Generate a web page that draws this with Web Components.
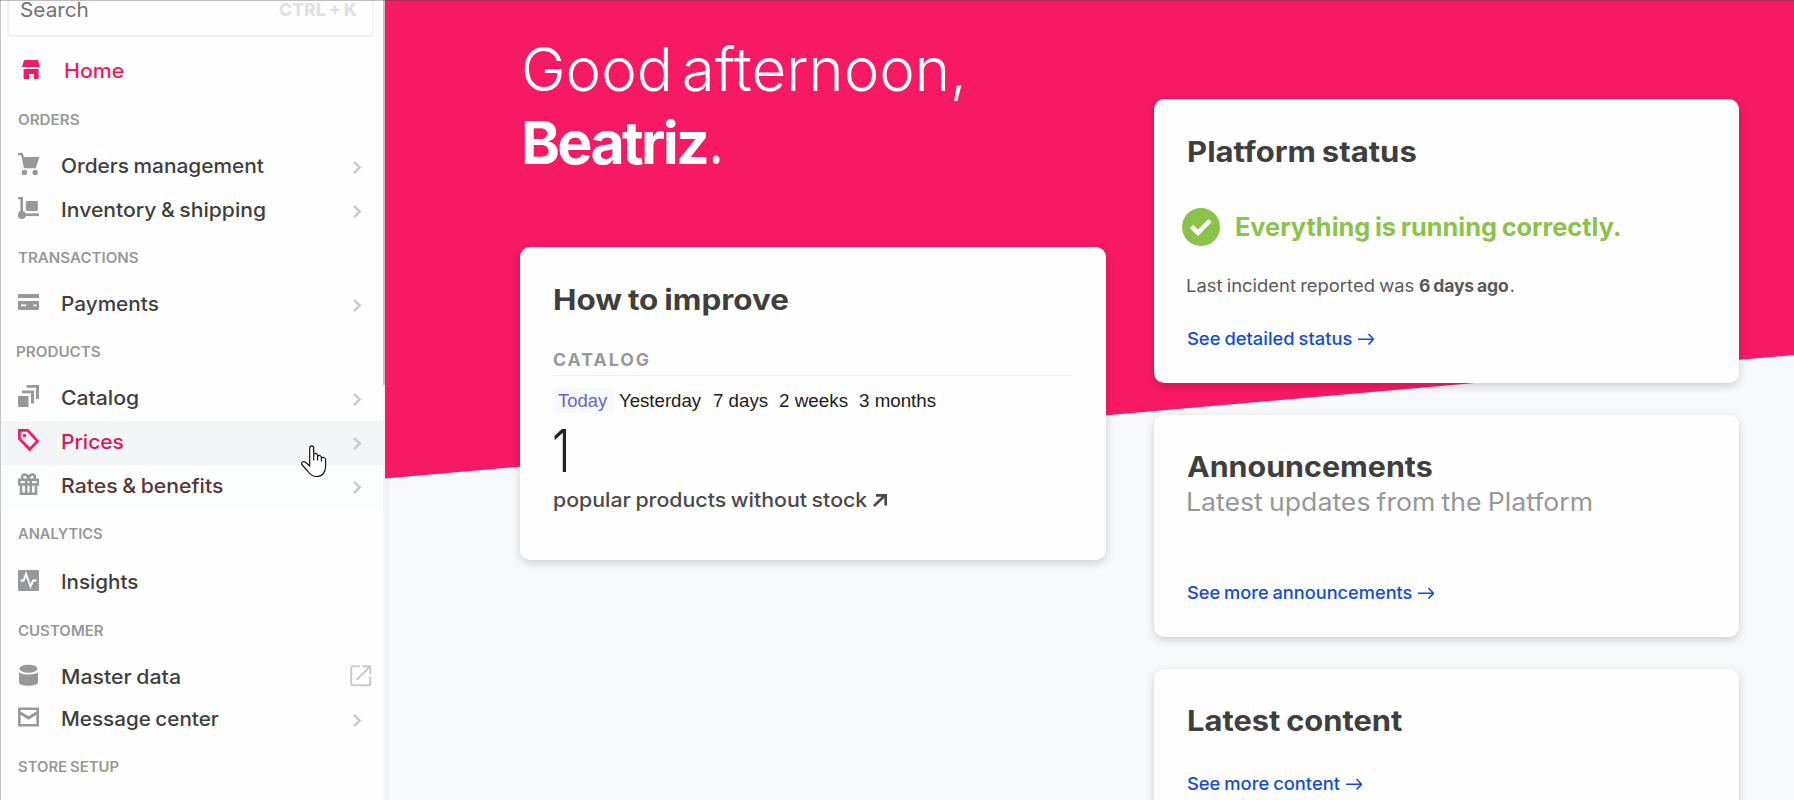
<!DOCTYPE html>
<html lang="en">
<head>
<meta charset="utf-8">
<title>Home</title>
<style>
html, body { margin: 0; height: 800px; overflow: hidden; background: #f7f9fb; font-family: Inter, "Noto Sans", sans-serif; }
</style>
</head>
<body>
<vt-app></vt-app>
<script>
const pen = document.createElement('canvas').getContext('2d');

/* One line of text whose glyphs span the width given in "w": words are set
   slightly closer, wide lines are stretched and narrow ones are tracked in. */
class VtText extends HTMLElement {
  connectedCallback() {
    const size = +this.getAttribute('size'), weight = this.getAttribute('weight') || 400;
    const w = +this.getAttribute('w'), text = this.textContent;
    const face = this.getAttribute('face') || 'Inter';
    const lh = this.getAttribute('lh') || Math.round(size * 1.2);
    const gap = face === 'Inter' ? +(this.getAttribute('gap') || -0.05) * size : 0;
    const most = +(this.getAttribute('stretch') || 1.14);
    pen.font = `${weight} ${size}px "${face}"`;
    const m = pen.measureText(text);
    const ink = m.actualBoundingBoxLeft + m.actualBoundingBoxRight + gap * (text.split(' ').length - 1);
    let scale = 1, track = 0;
    if (text.length === 1) scale = w / (m.actualBoundingBoxLeft + m.actualBoundingBoxRight);
    else if (w > ink) { scale = Math.min(w / ink, most); track = (w / scale - ink) / (text.length - 1); }
    else track = (w - ink) / (text.length - 1);
    this.attachShadow({mode: 'open'}).innerHTML = `<style>
      :host{display:block;flex:none;white-space:pre;width:${w}px;height:${lh}px;font:${weight} ${size}px/${lh}px "${face}",sans-serif;letter-spacing:${track.toFixed(3)}px;word-spacing:${gap.toFixed(2)}px}
      span{display:block;width:max-content;margin-left:${m.actualBoundingBoxLeft * scale}px;transform:scaleX(${scale.toFixed(4)});transform-origin:0 0}</style><span><slot></slot></span>`;
  }
}

const ICONS = {
  home: '<path d="M3 0h13l2 7H0L2 .8Q2.300 0 3 0zM1.600 9h15v9.300q0 .7-.7.700H12v-5H7v5H2.300q-.7 0-.7-.7z"/>',
  cart: '<path d="M0 0h4.600l1.400 4h15q.4 0 .2.600L17.800 15.300H6L3.600 4 2.800 2.300H0z"/><circle cx="6.500" cy="19.400" r="2.700"/><circle cx="17.200" cy="19.400" r="2.700"/>',
  dolly: '<path d="M0 0h5v14.200h-2.600V2.200H0z"/><circle cx="3.900" cy="18" r="4"/><path d="M5 16.400h16v2.700H5z"/><rect x="7.800" y="4" width="12" height="10" rx="1"/>',
  card: '<path d="M1 3h19q1 0 1 1V7H0V4q0-1 1-1z"/><path fill-rule="evenodd" d="M0 10h21v8q0 1-1 1H1q-1 0-1-1zM3 13.500v1.800h5v-1.800zm12.500 0v1.800h3v-1.800z"/>',
  catalog: '<rect y="11" width="10.500" height="11" rx="1"/><path d="M4 5.500h12v13h-3V8.200H4zM8.500 0H21v14h-3V2.700H8.500z"/>',
  tag: '<path d="M1.400 1.400h8.300l9.800 10.800-7.800 8.300L1.400 9.800z" fill="none" stroke="currentColor" stroke-width="2.700"/><circle cx="6.500" cy="6.500" r="1.700"/>',
  gift: '<g fill="none" stroke="currentColor" stroke-width="2.500"><rect x="1.200" y="6.800" width="18.600" height="4.600"/><path d="M3 11v9.700h15V11M8.200 7v14M12.800 7v14M10.500 6.500C10.200 3 8.600 1.400 6.300 1.400S3.300 4.700 5 6.500M10.500 6.500c.3-3.500 1.900-5.100 4.200-5.100s3 3.300 1.300 5.100"/></g>',
  insights: '<rect y="1" width="21" height="21" rx="1"/><path d="M2.500 11.500h3.200L8 5l4.500 12.500 2.500-6h3.500" fill="none" stroke="#fff" stroke-width="2"/>',
  db: '<ellipse cx="10.500" cy="4.700" rx="9" ry="4"/><path d="M1 8.200c2.500 3 16.500 3 19 0v10c0 4.800-19 4.800-19 0z"/>',
  mail: '<path d="M1.300 2.800h18.400v16.400H1.300z" fill="none" stroke="currentColor" stroke-width="2.600"/><path d="M2 6.800l8.500 5.200L19 6.800" fill="none" stroke="currentColor" stroke-width="2.800"/>',
  external: '<path d="M10 1.200H2.200q-1 0-1 1v17q0 1 1 1h17q1 0 1-1V11.500M6.500 15L19 2.500M12.500 1.200h7.700V9" fill="none" stroke="currentColor" stroke-width="2"/>',
  chevron: '<path d="M1 .8l5.800 5.700L1 12.200" fill="none" stroke="currentColor" stroke-width="2.500"/>'
};
class VtIcon extends HTMLElement {
  connectedCallback() {
    this.attachShadow({mode: 'open'}).innerHTML = `<style>:host{display:block;flex:none;width:22px;height:22px}svg{display:block;overflow:visible}</style>
      <svg width="22" height="22" viewBox="0 0 22 22" fill="currentColor">${ICONS[this.getAttribute('name')]}</svg>`;
  }
}

/* Sidebar entry: icon, label and the mark at its right edge. */
class VtItem extends HTMLElement {
  connectedCallback() {
    const end = this.getAttribute('end') ?? 'chevron';
    this.attachShadow({mode: 'open'}).innerHTML = `<style>
      :host{display:flex;height:44px;padding-left:17px;color:#3f3f40;box-sizing:border-box}
      .i{width:44px;padding-top:8px;color:#979899}
      :host([active]){color:#dd1659}
      :host([active]) .i{color:#f71963}
      :host([hover]){background:#f4f5f7}
      .e{margin-left:auto;width:30px;padding-top:16px;color:#cacbcc}
      .e.external{width:33px;padding-top:9px}
      :host([home]){padding-left:21px;color:#f71963}
      :host([home]) .i{width:43px;padding-top:10px;color:#f71963}</style>
      <div class="i"><vt-icon name="${this.getAttribute('icon')}"></vt-icon></div>
      <vt-text size="20" weight="500" lh="42" w="${this.getAttribute('w')}">${this.getAttribute('label').replace('&','&amp;')}</vt-text>
      ${end ? `<div class="e ${end}"><vt-icon name="${end}"></vt-icon></div>` : ''}`;
  }
}
class VtHead extends HTMLElement {
  connectedCallback() {
    this.attachShadow({mode: 'open'}).innerHTML = `<style>:host{display:block;box-sizing:border-box;padding-left:16.500px;color:#979899}</style>
      <vt-text size="14" weight="600" lh="17" w="${this.getAttribute('w')}">${this.textContent}</vt-text>`;
  }
}
class VtSidebar extends HTMLElement {
  connectedCallback() {
    this.attachShadow({mode: 'open'}).innerHTML = `<style>
      :host{display:flex;position:relative;width:385px;height:800px;flex:none;background:#fefefe;border-left:1px solid #c6c6c8;box-sizing:border-box}
      nav{width:382px}
      .search{display:flex;align-items:center;justify-content:space-between;box-sizing:border-box;width:367px;height:54px;margin:-17px 0 13px 6px;padding:0 15px 0 12px;border:2px solid #f0f2f3;border-radius:5px;color:#727273}
      .search vt-text + vt-text{color:#e0e1e1}
      vt-head{height:var(--h);padding-top:var(--t)}
      .bar{width:2px;background:#f2f4f5}
      .bar i{display:block;height:385px;background:#c1c1c3}
      .cursor{position:absolute;left:300px;top:445px}</style>
      <nav>
      <div class="search"><vt-text size="20" lh="18" w="67">Search</vt-text><vt-text size="17.500" lh="18" weight="800" w="78">CTRL + K</vt-text></div>
      <vt-item home end="" icon="home" label="Home" w="58.500"></vt-item>
      <vt-head style="--h:51px;--t:17px" w="61.500">ORDERS</vt-head>
      <vt-item icon="cart" label="Orders management" w="202"></vt-item>
      <vt-item icon="dolly" label="Inventory &amp; shipping" w="202.500"></vt-item>
      <vt-head style="--h:50px;--t:16px" w="120.500">TRANSACTIONS</vt-head>
      <vt-item icon="card" label="Payments" w="96"></vt-item>
      <vt-head style="--h:50px;--t:16px" w="83.500">PRODUCTS</vt-head>
      <vt-item icon="catalog" label="Catalog" w="75.500"></vt-item>
      <vt-item active hover icon="tag" label="Prices" w="61"></vt-item>
      <vt-item icon="gift" label="Rates &amp; benefits" w="160.500" style="color:#573640;background:#fcfefd"></vt-item>
      <vt-head style="--h:52px;--t:16px" w="84.500">ANALYTICS</vt-head>
      <vt-item icon="insights" end="" label="Insights" w="75.500"></vt-item>
      <vt-head style="--h:51px;--t:17px" w="85.500">CUSTOMER</vt-head>
      <vt-item icon="db" end="external" label="Master data" w="117.500" style="height:42px"></vt-item>
      <vt-item icon="mail" label="Message center" w="157"></vt-item>
      <vt-head style="--h:50px;--t:16px" w="101">STORE SETUP</vt-head>
      </nav>
      <div class="bar"><i></i></div>
      <svg class="cursor" width="26" height="33" viewBox="0 0 26 33"><path d="M8.700 21V3.200c0-3.200 4-3.200 4 0V15v-5.500c1-2 3.800-1.200 3.900 1V15v-3.500c1-1.800 3.700-1 3.800 1V16v-3c1.200-1.200 4-.5 4.200 1.500v7c0 6-3.500 10-9 10-5 0-7.200-2.700-9-5.500L.8 19.500c-.8-2 1-3.500 3.300-2.500z" fill="#fefefe" stroke="#17171b" stroke-width="1.200" stroke-linejoin="round"/></svg>`;
  }
}
class VtCard extends HTMLElement {
  connectedCallback() {
    this.attachShadow({mode: 'open'}).innerHTML = `<style>:host{display:block;box-sizing:border-box;background:#fefefe;border-radius:10px;padding:35px 33px;color:#3f3f40;box-shadow:0 3px 10px rgba(0,0,0,.18)}</style><slot></slot>`;
  }
}
class VtLink extends HTMLElement {
  connectedCallback() {
    this.attachShadow({mode: 'open'}).innerHTML = `<style>:host{display:flex;gap:6px;height:22px;color:#134cd8}svg{margin-top:5px}</style>
      <vt-text size="17.500" weight="500" lh="22" w="${this.getAttribute('w')}">${this.textContent}</vt-text>
      <svg width="16" height="12" viewBox="0 0 16 12" fill="none" stroke="currentColor" stroke-width="1.600"><path d="M0 6.300h15M10.500 1l5 5.300-5 5.200"/></svg>`;
  }
}
class VtMain extends HTMLElement {
  connectedCallback() {
    this.attachShadow({mode: 'open'}).innerHTML = `<style>
      :host{display:block;position:relative;flex:1;height:800px;overflow:hidden;background:linear-gradient(90deg,#f1f3f3 5px,#f7f9fb 5px)}
      .hero{position:absolute;inset:0;background:#f71963;clip-path:polygon(0 0,100% 0,100% 355px,0 478.500px)}
      .cols{position:relative;display:grid;grid-template-columns:586px 585px;column-gap:48px;padding-left:135px;align-items:start}
      h1{margin:32px 0 67px 4px;color:#fff;font-weight:400}
      h1 div{display:flex;gap:5px}
      .right{display:grid;gap:32px;margin-top:99px}
      .label{border-bottom:1px solid #f0f1f2;padding-bottom:5px;margin:33px 0 12px;color:#979899}
      .tabs{display:flex;gap:11px;color:#1c1c1e}
      .today{padding:0 6px 0 5px;background:#f8f9fc;color:#6c63c8;margin-right:-6px}
      .num{margin:8px 0 7px 1px;color:#232326}
      .pop{display:flex;gap:6px;color:#4a4a4b;margin-left:1px}
      .ok{display:flex;align-items:center;gap:16px;margin:40px 0 29px -5px;color:#8bc34a}
      .last{display:flex;color:#5a5a5b;gap:5px}
      </style>
      <div class="hero"></div>
      <div class="cols">
        <section>
          <h1><vt-text size="60" weight="300" lh="74" w="438" gap="-.13">Good afternoon,</vt-text><div><vt-text size="59" weight="700" lh="74" w="183">Beatriz</vt-text><vt-text size="59" weight="500" lh="74" w="8">.</vt-text></div></h1>
          <vt-card style="height:313px">
            <vt-text size="28" weight="700" lh="36" w="234" style="margin:0 0 -2px 1px">How to improve</vt-text>
            <div class="label"><vt-text size="17.500" weight="700" lh="21" w="96" stretch="1.01">CATALOG</vt-text></div>
            <div class="tabs"><div class="today"><vt-text face="Liberation Sans" size="18.300" lh="25" w="50">Today</vt-text></div><vt-text face="Liberation Sans" size="18.300" lh="25" w="83">Yesterday</vt-text><vt-text face="Liberation Sans" size="18.300" lh="25" w="55">7 days</vt-text><vt-text face="Liberation Sans" size="18.300" lh="25" w="69">2 weeks</vt-text><vt-text face="Liberation Sans" size="18.300" lh="25" w="77">3 months</vt-text></div>
            <div class="num"><vt-text size="59" weight="300" lh="60" w="12">1</vt-text></div>
            <div class="pop"><vt-text size="20" weight="500" lh="24" w="313">popular products without stock</vt-text>
            <svg width="14" height="24" viewBox="0 0 14 24" fill="none" stroke="currentColor" stroke-width="2.700"><path d="M.8 18L12 7.500M3 7.400h9.700V17.500"/></svg></div>
          </vt-card>
        </section>
        <section class="right">
          <vt-card style="height:284px">
            <vt-text size="28" weight="700" lh="36" w="228" style="margin:0 0 -2px 1px">Platform status</vt-text>
            <div class="ok"><svg width="38" height="38" viewBox="0 0 38 38"><circle cx="19" cy="19" r="19" fill="currentColor"/><path d="M9.500 18.500l6.500 6.300L28 12.500" fill="none" stroke="#fefefe" stroke-width="4.600"/></svg><vt-text size="25" weight="700" lh="30" w="384">Everything is running correctly.</vt-text></div>
            <div class="last"><vt-text size="17.500" lh="21" w="227">Last incident reported was</vt-text><vt-text size="17.500" weight="700" lh="21" w="90">6 days ago</vt-text><vt-text size="17.500" weight="500" lh="21" w="2.500" style="margin-left:-3.500px">.</vt-text></div>
            <vt-link w="165" style="margin-top:32px">See detailed status</vt-link>
          </vt-card>
          <vt-card style="height:222px">
            <vt-text size="28" weight="700" lh="34" w="245">Announcements</vt-text>
            <vt-text size="25" lh="30" w="403" style="margin:3px 0 65px 1px;color:#979899">Latest updates from the Platform</vt-text>
            <vt-link w="225">See more announcements</vt-link>
          </vt-card>
          <vt-card style="height:222px">
            <vt-text size="28" weight="700" lh="34" w="214" style="margin-left:1px">Latest content</vt-text>
            <vt-link w="153" style="margin-top:35px">See more content</vt-link>
          </vt-card>
        </section>
      </div>`;
  }
}
class VtApp extends HTMLElement {
  connectedCallback() {
    this.attachShadow({mode: 'open'}).innerHTML = `<style>
      :host{display:flex;position:relative;width:1794px;height:800px;overflow:hidden}
      :host::after{content:"";position:absolute;left:0;right:0;top:0;height:1px;background:rgba(70,70,75,.35)}</style>
      <vt-sidebar></vt-sidebar><vt-main></vt-main>`;
  }
}
for (const [tag, cls] of [['vt-text', VtText], ['vt-icon', VtIcon], ['vt-item', VtItem], ['vt-head', VtHead], ['vt-link', VtLink], ['vt-card', VtCard], ['vt-sidebar', VtSidebar], ['vt-main', VtMain], ['vt-app', VtApp]]) customElements.define(tag, cls);
</script>
</body>
</html>
